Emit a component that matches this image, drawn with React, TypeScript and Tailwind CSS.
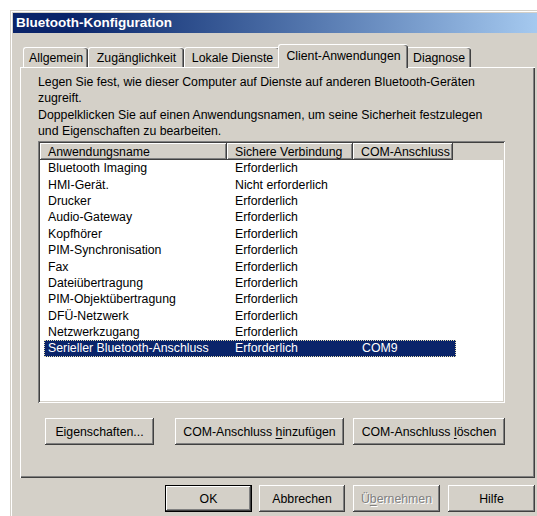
import React from "react";

const raised =
  "shadow-[inset_-1px_-1px_0_#404040,inset_1px_1px_0_#fff,inset_-2px_-2px_0_#808080]";
const sunken =
  "shadow-[inset_1px_1px_0_#808080,inset_-1px_-1px_0_#fff,inset_2px_2px_0_#404040,inset_-2px_-2px_0_#d4d0c8]";

type Tab = { label: string; width: string; active?: boolean };

const tabs: Tab[] = [
  { label: "Allgemein", width: "w-[65px]" },
  { label: "Zugänglichkeit", width: "w-[96px]" },
  { label: "Lokale Dienste", width: "w-[96px]" },
  { label: "Client-Anwendungen", width: "w-[130px]", active: true },
  { label: "Diagnose", width: "w-[65px]" },
];

const rows: [string, string, string][] = [
  ["Bluetooth Imaging", "Erforderlich", ""],
  ["HMI-Gerät.", "Nicht erforderlich", ""],
  ["Drucker", "Erforderlich", ""],
  ["Audio-Gateway", "Erforderlich", ""],
  ["Kopfhörer", "Erforderlich", ""],
  ["PIM-Synchronisation", "Erforderlich", ""],
  ["Fax", "Erforderlich", ""],
  ["Dateiübertragung", "Erforderlich", ""],
  ["PIM-Objektübertragung", "Erforderlich", ""],
  ["DFÜ-Netzwerk", "Erforderlich", ""],
  ["Netzwerkzugang", "Erforderlich", ""],
  ["Serieller Bluetooth-Anschluss", "Erforderlich", "COM9"],
];

const selectedRow = 11;

function Button({
  children,
  className = "",
  isDefault = false,
}: {
  children: React.ReactNode;
  className?: string;
  isDefault?: boolean;
}) {
  const inner = (
    <div
      className={`flex h-full w-full items-center justify-center bg-[#d4d0c8] ${raised}`}
    >
      {children}
    </div>
  );
  return isDefault ? (
    <div className={`h-[27px] border border-black ${className}`}>{inner}</div>
  ) : (
    <div className={`h-[27px] ${className}`}>{inner}</div>
  );
}

function TabStrip() {
  return (
    <div className="flex h-[23px] items-end pl-[3px]">
      {tabs.map((t) =>
        t.active ? (
          <div
            key={t.label}
            className={`relative z-10 -mx-[2px] -mb-px flex h-[24px] items-start justify-center rounded-t-[3px] border-l border-t border-white bg-[#d4d0c8] pt-[3px] shadow-[inset_-1px_0_0_#404040,inset_-2px_0_0_#808080] ${t.width}`}
          >
            {t.label}
          </div>
        ) : (
          <div
            key={t.label}
            className={`flex h-[20px] items-center justify-center rounded-t-[3px] border-l border-t border-white bg-[#d4d0c8] shadow-[inset_-1px_0_0_#404040,inset_-2px_0_0_#808080] ${t.width}`}
          >
            {t.label}
          </div>
        ),
      )}
    </div>
  );
}

function AppList() {
  return (
    <div className={`mt-[2px] h-[262px] w-[467px] bg-white p-[2px] ${sunken}`}>
      <div className="flex h-[17px] bg-[#d4d0c8]">
        <div className={`flex w-[187px] items-center pl-[8px] ${raised}`}>
          Anwendungsname
        </div>
        <div className={`flex w-[126px] items-center pl-[8px] ${raised}`}>
          Sichere Verbindung
        </div>
        <div className={`flex w-[100px] items-center pl-[8px] ${raised}`}>
          COM-Anschluss
        </div>
      </div>
      <div className="pl-[4px]">
        {rows.map(([name, secure, port], i) => (
          <div
            key={name}
            className={`flex h-[16.4px] w-[412px] items-center ${
              i === selectedRow
                ? "bg-[#0a246a] text-white outline-1 -outline-offset-1 outline-dotted outline-[#e8e0b0]"
                : ""
            }`}
          >
            <div className="w-[183px] pl-[4px]">{name}</div>
            <div className="w-[126px] pl-[8px]">{secure}</div>
            <div className="w-[103px] pl-[9px]">{port}</div>
          </div>
        ))}
      </div>
    </div>
  );
}

export default function App() {
  return (
    <div className="h-[516px] w-[537px] overflow-hidden bg-white pl-[10px] pt-[10px] font-['Liberation_Sans',Arial,sans-serif] text-[12.3px] leading-[16px] text-black">
      <div className="h-[520px] w-[560px] border border-[#d4d0c8] bg-[#d4d0c8] p-[2px] shadow-[inset_1px_1px_0_#fff]">
        {/* title bar */}
        <div className="flex h-[20px] items-center bg-gradient-to-r from-[#0a246a] from-10% to-[#a6caf0] to-95% pl-[3px] text-[13.5px] font-bold text-white">
          Bluetooth-Konfiguration
        </div>

        <div className="pl-[7px] pt-[11px]">
          <TabStrip />

          <div className="h-[411px] w-[515px] pl-[18px] pt-[7px] shadow-[inset_1px_1px_0_#fff,inset_-1px_-1px_0_#404040,inset_-2px_-2px_0_#808080]">
            <p>
              Legen Sie fest, wie dieser Computer auf Dienste auf anderen Bluetooth-Geräten
              <br />
              zugreift.
            </p>
            <p className="mt-px">
              Doppelklicken Sie auf einen Anwendungsnamen, um seine Sicherheit festzulegen
              <br />
              und Eigenschaften zu bearbeiten.
            </p>

            <AppList />

            <div className="mt-[15px] flex pl-[7px]">
              <Button className="w-[109px]">Eigenschaften...</Button>
              <Button className="ml-[21px] w-[169px]">
                <span>
                  COM-Anschluss <u className="underline-offset-2">h</u>inzufügen
                </span>
              </Button>
              <Button className="ml-[9px] w-[152px]">
                <span>
                  COM-Anschluss <u className="underline-offset-2">l</u>öschen
                </span>
              </Button>
            </div>
          </div>

          {/* dialog buttons */}
          <div className="mt-[7px] flex pl-[145px]">
            <Button className="w-[87px]" isDefault>
              OK
            </Button>
            <Button className="ml-[7px] w-[86px]">Abbrechen</Button>
            <Button className="ml-[8px] w-[87px]">
              <span className="text-[#808080] [text-shadow:1px_1px_0_#fff]">
                Ü<u className="underline-offset-2">b</u>ernehmen
              </span>
            </Button>
            <Button className="ml-[8px] w-[87px]">Hilfe</Button>
          </div>
        </div>
      </div>
    </div>
  );
}
